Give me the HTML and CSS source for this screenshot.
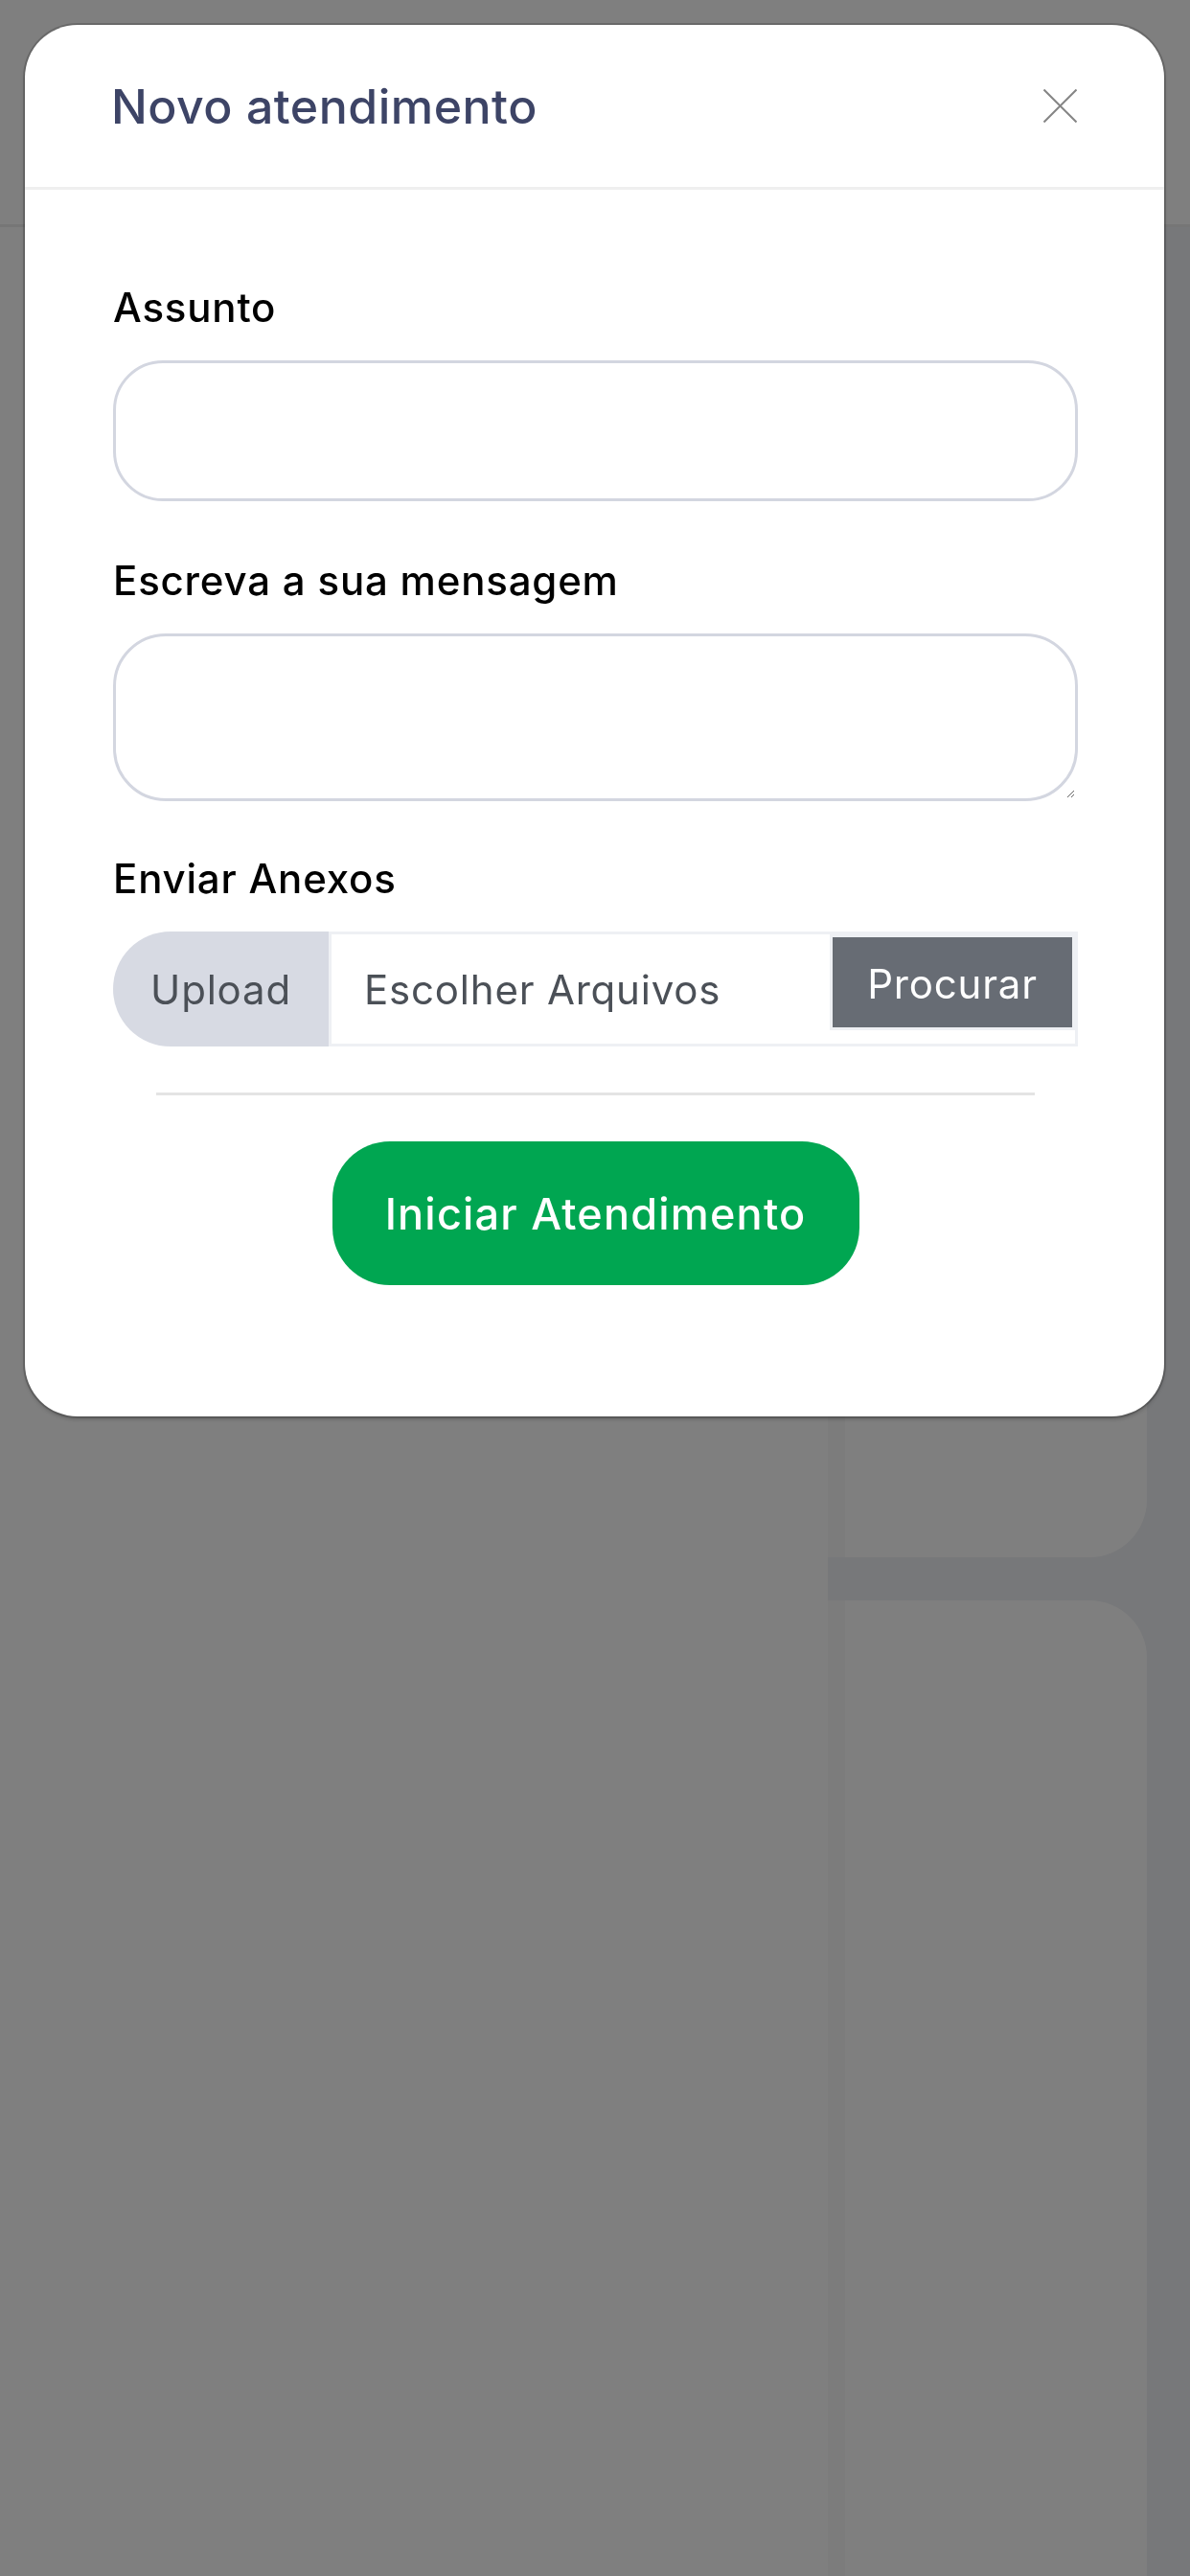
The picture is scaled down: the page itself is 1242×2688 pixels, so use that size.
FILE: index.html
```html
<!DOCTYPE html>
<html lang="pt-BR">
<head>
    <meta charset="UTF-8">
    <meta name="viewport" content="width=device-width, initial-scale=1.0">
    <title>Novo atendimento</title>
    <link rel="stylesheet" href="styles.css">
</head>
<body>
    <!-- pagina por tras do modal -->
    <div class="page">
        <div class="page-header"></div>
        <div class="page-content">
            <div class="main-panel"></div>
            <div class="side">
                <div class="side-card first"></div>
                <div class="side-card second"></div>
            </div>
        </div>
    </div>

    <div class="backdrop"></div>

    <div class="modal">
        <div class="modal-header">
            <h1 class="modal-title">Novo atendimento</h1>
            <button class="close-btn" type="button" aria-label="Fechar">
                <svg width="35" height="35" viewBox="0 0 35 35">
                    <line x1="0.5" y1="0.5" x2="34.5" y2="34.5" stroke="#858585" stroke-width="2"/>
                    <line x1="34.5" y1="0.5" x2="0.5" y2="34.5" stroke="#858585" stroke-width="2"/>
                </svg>
            </button>
        </div>

        <form class="modal-body">
            <div class="field">
                <label class="field-label" for="assunto">Assunto</label>
                <input class="text-input" id="assunto" type="text">
            </div>

            <div class="field message">
                <label class="field-label" for="mensagem">Escreva a sua mensagem</label>
                <textarea class="text-area" id="mensagem"></textarea>
            </div>

            <div class="field attachments">
                <span class="field-label">Enviar Anexos</span>
                <div class="file-group">
                    <span class="file-prefix">Upload</span>
                    <div class="file-field">
                        <span class="file-placeholder">Escolher Arquivos</span>
                        <span class="browse-btn">Procurar</span>
                    </div>
                </div>
            </div>

            <hr class="divider">

            <button class="submit-btn" type="button">Iniciar Atendimento</button>
        </form>
    </div>
</body>
</html>
```

FILE: styles.css
```css
body {
    margin: 0;
    width: 1242px;
    height: 2688px;
    overflow: hidden;
    background: #eef0f4;
    font-family: Inter, "Noto Sans", sans-serif;
}

/* background page */
.page {
    display: flex;
    flex-direction: column;
    height: 2688px;
}
.page-header {
    height: 234px;
    background: #fff;
    border-bottom: 3px solid #ececec;
}
.page-content {
    display: flex;
    flex: 1;
}
.main-panel {
    width: 864px;
    background: #fff;
}
.side {
    width: 333px;
    display: flex;
    flex-direction: column;
    gap: 45px;
}
.side-card {
    background: #fff;
    border-left: 18px solid #f9f9f9;
}
.side-card.first {
    height: 1388px;
    border-radius: 0 0 60px 0;
}
.side-card.second {
    flex: 1;
    border-radius: 0 60px 0 0;
}

.backdrop {
    position: fixed;
    inset: 0;
    background: rgba(0, 0, 0, 0.5);
}

/* modal */
.modal {
    position: absolute;
    left: 26px;
    top: 26px;
    width: 1189px;
    background: #fff;
    border-radius: 55px;
    box-shadow: 0 0 0 2px rgba(0, 0, 0, 0.17), 0 3px 4px rgba(0, 0, 0, 0.2);
}
.modal-header {
    height: 169px;
    display: flex;
    align-items: center;
    justify-content: space-between;
    padding: 0 91px 0 90px;
    border-bottom: 3px solid #efefef;
}
.modal-title {
    margin: 0;
    font-size: 50px;
    font-weight: 500;
    letter-spacing: 0.5px;
    color: #3d4466;
}
.close-btn {
    border: none;
    background: none;
    padding: 0;
    width: 35px;
    height: 35px;
    display: block;
}
.close-btn svg {
    display: block;
}

.modal-body {
    padding: 98px 90px 137px 92px;
}
.field {
    margin-bottom: 58px;
}
.field.message {
    margin-bottom: 56px;
}
.field.attachments {
    margin-bottom: 0;
}
.field-label {
    display: block;
    font-size: 42px;
    line-height: 50px;
    font-weight: 500;
    letter-spacing: 0.8px;
    color: #000;
    margin-bottom: 30px;
}
.text-input,
.text-area {
    display: block;
    width: 100%;
    box-sizing: border-box;
    border: 3px solid #d3d6e0;
    background: #fff;
    font-family: inherit;
    font-size: 42px;
    outline: none;
}
.text-input {
    height: 147px;
    border-radius: 52px;
    padding: 0 40px;
}
.text-area {
    height: 175px;
    border-radius: 55px;
    padding: 30px 40px;
    resize: vertical;
}

/* attachments */
.file-group {
    display: flex;
    height: 120px;
}
.file-prefix {
    width: 225px;
    display: flex;
    align-items: center;
    justify-content: center;
    background: #d7dae3;
    border-radius: 60px 0 0 60px;
    font-size: 42px;
    letter-spacing: 0.8px;
    color: #4b5057;
}
.file-field {
    flex: 1;
    display: flex;
    align-items: flex-start;
    border: 3px solid #eef0f4;
    padding-left: 34px;
}
.file-placeholder {
    align-self: center;
    font-size: 42px;
    letter-spacing: 0.8px;
    color: #4b5057;
}
.browse-btn {
    margin-left: auto;
    width: 256px;
    height: 100px;
    box-sizing: border-box;
    border: 3px solid #eef0f4;
    background: #676c74;
    color: #fff;
    font-size: 42px;
    letter-spacing: 0.8px;
    display: flex;
    align-items: center;
    justify-content: center;
    padding-top: 2px;
}

.divider {
    border: none;
    height: 3px;
    background: #e4e4e4;
    margin: 48px 45px;
}
.submit-btn {
    display: block;
    margin: 0 auto;
    width: 550px;
    height: 150px;
    border: none;
    border-radius: 60px;
    background: #00a651;
    color: #fff;
    font-family: inherit;
    font-size: 45px;
    font-weight: 500;
    letter-spacing: 1.2px;
}
```
